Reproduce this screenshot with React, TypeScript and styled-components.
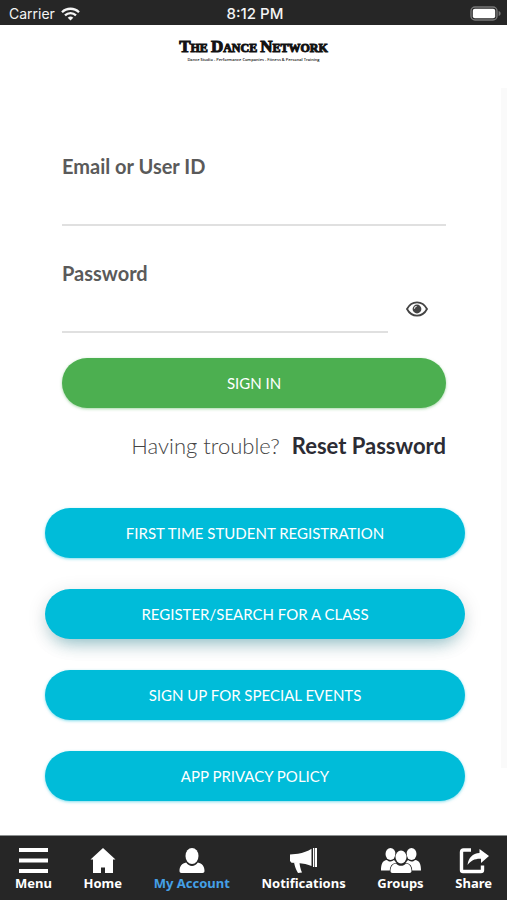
import React, { useState } from "react";
import styled, { createGlobalStyle, css } from "styled-components";

const Global = createGlobalStyle`
  *, *::before, *::after { box-sizing: border-box; }
  body { margin: 0; background: #fff; font-family: Lato, "Open Sans", sans-serif; }
  button, input { font: inherit; }
`;

const Screen = styled.div`
  min-height: 100vh;
  display: flex;
  flex-direction: column;
  background: #fff;
`;

const StatusBar = styled.header`
  display: grid;
  grid-template-columns: 1fr auto 1fr;
  align-items: center;
  height: 25px;
  padding: 2px 6px 0 9px;
  background: #262626;
  color: #f4f4f4;
  font-family: Inter, "Liberation Sans", sans-serif;
  font-size: 14px;
`;

const Carrier = styled.div`
  display: flex;
  align-items: center;
  gap: 6px;
`;

const Clock = styled.time`
  font-weight: 500;
  font-size: 15px;
`;

const Battery = styled.div`
  justify-self: end;
  display: flex;
`;

const Brand = styled.div`
  display: flex;
  flex-direction: column;
  align-items: center;
  height: 63px;
  padding-top: 13px;
  color: #111;
`;

const BrandName = styled.div`
  display: flex;
  gap: 3px;
  font-family: "Liberation Serif", serif;
  font-size: 12px;
  line-height: 17px;
  font-weight: 700;
  text-transform: uppercase;
  white-space: nowrap;
  -webkit-text-stroke: 1px #111;
`;

const BrandWord = styled.span`
  display: block;

  &::first-letter {
    font-size: 17px;
  }
`;

const Tagline = styled.div`
  font-family: "Open Sans", sans-serif;
  font-size: 4px;
  line-height: 6px;
  font-weight: 600;
  white-space: nowrap;
`;

const Content = styled.main`
  flex: 1;
  display: flex;
`;

const Panel = styled.div`
  flex: 1;
  padding: 66px 36px 33px 45px;
`;

const Edge = styled.div`
  flex: none;
  width: 6px;
  margin-bottom: 67px;
  background: #fafafa;
`;

const Form = styled.form`
  display: flex;
  flex-direction: column;
  padding: 0 19px 0 17px;
`;

const Label = styled.label`
  font-size: 20px;
  line-height: 24px;
  font-weight: 700;
  color: #5a5a5a;
`;

const Field = styled.input`
  display: block;
  flex: 1 1 auto;
  width: 100%;
  min-width: 0;
  height: 48px;
  padding: 12px 0 4px;
  border: 0;
  border-bottom: 2px solid #e0e0e0;
  border-radius: 0;
  background: transparent;
  color: #444;
  font-size: 20px;
  outline: none;
`;

const FieldBlock = styled.div`
  display: flex;
  flex-direction: column;
  margin-bottom: 35px;
`;

const PasswordBlock = styled(FieldBlock)`
  margin-bottom: 25px;
`;

const PasswordRow = styled.div`
  display: flex;
  align-items: center;
`;

const EyeButton = styled.button`
  flex: none;
  display: flex;
  align-items: center;
  justify-content: center;
  width: 58px;
  height: 48px;
  padding: 0;
  border: 0;
  background: none;
  color: #444;
  cursor: pointer;
`;

const pill = css`
  display: flex;
  align-items: center;
  justify-content: center;
  width: 100%;
  height: 50px;
  border: 0;
  border-radius: 25px;
  color: #fff;
  font-size: 15px;
  line-height: 20px;
  text-transform: uppercase;
  text-decoration: none;
  cursor: pointer;
`;

const SignIn = styled.button`
  ${pill}
  background: #4caf50;
  box-shadow: 0 1px 3px rgba(76, 175, 80, 0.5);
`;

const Trouble = styled.p`
  display: flex;
  justify-content: flex-end;
  gap: 12px;
  margin: 24px 0 0;
  font-size: 22px;
  line-height: 28px;
  font-weight: 300;
  color: #444;
  white-space: nowrap;
`;

const ResetLink = styled.a`
  font-weight: 700;
  color: #2c2c34;
  text-decoration: none;
`;

const Actions = styled.nav`
  display: flex;
  flex-direction: column;
  gap: 31px;
  margin-top: 48px;
`;

const ActionLink = styled.a<{ $raised?: boolean }>`
  ${pill}
  background: #00bcd9;
  box-shadow: ${(p) =>
    p.$raised
      ? "0 10px 18px -8px rgba(0, 130, 150, 0.45), 0 4px 20px rgba(0, 0, 0, 0.12)"
      : "0 1px 3px rgba(0, 188, 217, 0.5)"};
`;

const TabBar = styled.nav`
  display: flex;
  justify-content: space-between;
  height: 65px;
  padding: 12px 15px 0;
  background: #262626;
  border-top: 1px solid #8c9090;
  font-family: "Noto Sans", "Open Sans", sans-serif;
  font-size: 13px;
  line-height: 18px;
  font-weight: 700;
`;

const Tab = styled.a<{ $active?: boolean }>`
  display: flex;
  flex-direction: column;
  align-items: center;
  color: ${(p) => (p.$active ? "#45a0e6" : "#fff")};
  text-decoration: none;
  white-space: nowrap;

  svg {
    display: block;
    color: #fff;
  }
`;

const WifiIcon = () => (
  <svg width="19" height="14" viewBox="0 0 19 14" fill="none" stroke="currentColor" strokeWidth="2.3" aria-hidden="true">
    <path d="M1 5.2a12.2 12.2 0 0 1 17 0" />
    <path d="M4 8.4a7.9 7.9 0 0 1 11 0" />
    <path d="M9.5 13.6 6.7 10.7a4.1 4.1 0 0 1 5.6 0z" fill="currentColor" stroke="none" />
  </svg>
);

const BatteryIcon = () => (
  <svg width="31" height="15" viewBox="0 0 31 15" aria-label="Battery full" role="img">
    <rect x="1" y="1" width="26" height="13" rx="4" fill="none" stroke="#777" strokeWidth="1.4" />
    <rect x="2.8" y="2.8" width="22.4" height="9.4" rx="2" fill="#fff" />
    <path d="M28.6 5v5c1.6-.6 2-1.5 2-2.5s-.4-1.9-2-2.5z" fill="#777" />
  </svg>
);

const EyeIcon = () => (
  <svg width="22" height="16" viewBox="0 0 22 16" aria-hidden="true">
    <path d="M1 8C3.2 3.8 6.8 1.4 11 1.4S18.8 3.8 21 8c-2.2 4.2-5.8 6.6-10 6.6S3.2 12.2 1 8z" fill="none" stroke="currentColor" strokeWidth="1.8" />
    <circle cx="11" cy="8" r="4.4" fill="currentColor" />
    <path d="M8.4 7.6A2.6 2.6 0 0 1 10.6 5.2" fill="none" stroke="#fff" strokeWidth="1.1" />
  </svg>
);

const MenuIcon = () => (
  <svg width="29" height="26" viewBox="0 0 29 26" fill="currentColor" aria-hidden="true">
    <path d="M0 0h29v4H0zM0 10.500h29v4H0zM0 21h29v4H0z" />
  </svg>
);

const HomeIcon = () => (
  <svg width="26" height="26" viewBox="0 0 26 26" fill="currentColor" aria-hidden="true">
    <path d="M13 0 .5 11.500H3V25h8v-5.500h4V25h8V11.500h2.500z" />
  </svg>
);

const UserIcon = () => (
  <svg width="26" height="26" viewBox="0 0 26 26" fill="currentColor" aria-hidden="true">
    <ellipse cx="13" cy="8" rx="6.500" ry="8" />
    <path d="M7.200 14.500C8.600 16.700 10.700 18 13 18s4.400-1.300 5.800-3.500c4.300.8 6.700 3.900 6.700 8.500 0 1.300-.7 2-2 2h-21c-1.300 0-2-.7-2-2 0-4.600 2.400-7.700 6.700-8.500z" />
  </svg>
);

const MegaphoneIcon = () => (
  <svg width="28" height="26" viewBox="0 0 28 26" fill="currentColor" aria-hidden="true">
    <path d="M0 6.500 8 5.800V15L1.500 14.700 0 13z" />
    <path d="M8 5.700C13 5 18 3 21.500.7V18C18 16.500 13 15.300 8 15z" />
    <path d="M23 0h1.300v19H23zM25 0h2v19h-2z" />
    <path d="M4 14.500h5.500c.2 3 1 6.500 2.500 10L8 25C6 22 4.800 18 4 14.500z" />
  </svg>
);

const GroupsIcon = () => (
  <svg width="40" height="26" viewBox="0 0 40 26" fill="currentColor" aria-hidden="true">
    <ellipse cx="9.500" cy="6" rx="5" ry="6" />
    <ellipse cx="30.500" cy="6" rx="5" ry="6" />
    <path d="M6 12c1 1 2.200 1.500 3.500 1.500 1.400 0 2.500-.5 3.500-1.400l3 3.400c-3.500 1-5.500 3.500-6 7H0c0-6.500 1.500-10 6-10.500zM34 12c-1 1-2.200 1.500-3.500 1.500-1.400 0-2.500-.5-3.500-1.400l-3 3.400c3.500 1 5.500 3.500 6 7h10c0-6.500-1.500-10-6-10.500z" />
    <g stroke="#262626" strokeWidth="1.500" paintOrder="stroke">
      <ellipse cx="20" cy="9" rx="5.500" ry="6.500" />
      <path d="M15 15.500c1.400 1.500 3 2.300 5 2.300s3.600-.8 5-2.300c3.800.6 5.500 3.500 5.500 7.500 0 1.300-.7 2-2 2h-17c-1.300 0-2-.7-2-2 0-4 1.700-6.900 5.500-7.500z" />
    </g>
  </svg>
);

const ShareIcon = () => (
  <svg width="30" height="26" viewBox="0 0 30 26" fill="currentColor" aria-hidden="true">
    <path d="M12 2H4.500Q2.500 2 2.500 4v18q0 1.500 1.500 1.500h18q1.500 0 1.500-1.500v-4.500" fill="none" stroke="currentColor" strokeWidth="3.400" />
    <path d="M20.500 1 30 8l-8 7v-4.200C16 10.500 12 12.500 8.500 17 9.500 9.500 13.500 5.500 20.500 5z" />
  </svg>
);

const actions = [
  { text: "First Time Student Registration" },
  { text: "Register/Search for a Class", raised: true },
  { text: "Sign Up for Special Events" },
  { text: "App Privacy Policy" },
];

const tabs = [
  { text: "Menu", Icon: MenuIcon },
  { text: "Home", Icon: HomeIcon },
  { text: "My Account", Icon: UserIcon, active: true },
  { text: "Notifications", Icon: MegaphoneIcon },
  { text: "Groups", Icon: GroupsIcon },
  { text: "Share", Icon: ShareIcon },
];

export default function App() {
  const [visible, setVisible] = useState(false);

  return (
    <Screen>
      <Global />
      <StatusBar>
        <Carrier>
          Carrier <WifiIcon />
        </Carrier>
        <Clock>8:12 PM</Clock>
        <Battery>
          <BatteryIcon />
        </Battery>
      </StatusBar>
      <Brand>
        <BrandName>
          <BrandWord>The</BrandWord> <BrandWord>Dance</BrandWord> <BrandWord>Network</BrandWord>
        </BrandName>
        <Tagline>Dance Studio - Performance Companies - Fitness &amp; Personal Training</Tagline>
      </Brand>
      <Content>
        <Panel>
          <Form onSubmit={(e) => e.preventDefault()}>
            <FieldBlock>
              <Label htmlFor="user">Email or User ID</Label>
              <Field id="user" type="text" autoComplete="username" />
            </FieldBlock>
            <PasswordBlock>
              <Label htmlFor="password">Password</Label>
              <PasswordRow>
                <Field id="password" type={visible ? "text" : "password"} autoComplete="current-password" />
                <EyeButton type="button" aria-label="Show password" onClick={() => setVisible(!visible)}>
                  <EyeIcon />
                </EyeButton>
              </PasswordRow>
            </PasswordBlock>
            <SignIn type="submit">Sign In</SignIn>
            <Trouble>
              <span>Having trouble?</span>
              <ResetLink href="#reset">Reset Password</ResetLink>
            </Trouble>
          </Form>
          <Actions aria-label="Account options">
            {actions.map((a) => (
              <ActionLink key={a.text} href="#" $raised={a.raised}>
                {a.text}
              </ActionLink>
            ))}
          </Actions>
        </Panel>
        <Edge />
      </Content>
      <TabBar aria-label="Main">
        {tabs.map(({ text, Icon, active }) => (
          <Tab key={text} href="#" $active={active} aria-current={active ? "page" : undefined}>
            <Icon />
            {text}
          </Tab>
        ))}
      </TabBar>
    </Screen>
  );
}
